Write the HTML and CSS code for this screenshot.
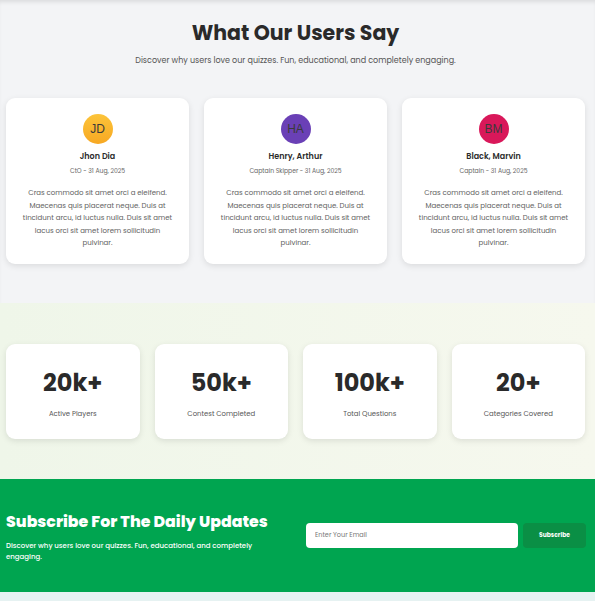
FILE: index.html
```html
<!DOCTYPE html>
<html lang="en">
<head>
<meta charset="utf-8">
<title>What Our Users Say</title>
<link rel="stylesheet" href="styles.css">
</head>
<body>
<section class="testimonials">
  <h2 class="title">What Our Users Say</h2>
  <p class="subtitle">Discover why users love our quizzes. Fun, educational, and completely engaging.</p>
  <div class="cards">
    <article class="card">
      <div class="avatar avatar-yellow">JD</div>
      <h3 class="name">Jhon Dia</h3>
      <p class="role">CtO - 31 Aug, 2025</p>
      <p class="quote">Cras commodo sit amet orci a eleifend. Maecenas quis placerat neque. Duis at tincidunt arcu, id luctus nulla. Duis sit amet lacus orci sit amet lorem sollicitudin pulvinar.</p>
    </article>
    <article class="card">
      <div class="avatar avatar-purple">HA</div>
      <h3 class="name">Henry, Arthur</h3>
      <p class="role">Captain Skipper - 31 Aug, 2025</p>
      <p class="quote">Cras commodo sit amet orci a eleifend. Maecenas quis placerat neque. Duis at tincidunt arcu, id luctus nulla. Duis sit amet lacus orci sit amet lorem sollicitudin pulvinar.</p>
    </article>
    <article class="card">
      <div class="avatar avatar-red">BM</div>
      <h3 class="name">Black, Marvin</h3>
      <p class="role">Captain - 31 Aug, 2025</p>
      <p class="quote">Cras commodo sit amet orci a eleifend. Maecenas quis placerat neque. Duis at tincidunt arcu, id luctus nulla. Duis sit amet lacus orci sit amet lorem sollicitudin pulvinar.</p>
    </article>
  </div>
</section>

<section class="stats">
  <div class="stat-grid">
    <div class="stat"><div class="stat-num">20k+</div><div class="stat-label">Active Players</div></div>
    <div class="stat"><div class="stat-num">50k+</div><div class="stat-label">Contest Completed</div></div>
    <div class="stat"><div class="stat-num">100k+</div><div class="stat-label">Total Questions</div></div>
    <div class="stat"><div class="stat-num">20+</div><div class="stat-label">Categories Covered</div></div>
  </div>
</section>

<section class="subscribe">
  <div class="sub-text">
    <h2 class="sub-title">Subscribe For The Daily Updates</h2>
    <p class="sub-desc">Discover why users love our quizzes. Fun, educational, and completely engaging.</p>
  </div>
  <form class="sub-form">
    <input class="sub-input" type="email" placeholder="Enter Your Email">
    <button class="sub-btn" type="button">Subscribe</button>
  </form>
</section>
<div class="bottom-strip"></div>
</body>
</html>
```
FILE: styles.css
```css
* { box-sizing: border-box; }
html, body { margin: 0; padding: 0; }
body {
  font-family: Poppins, "Open Sans", "Noto Sans", sans-serif;
  background: #f3f4f6;
  color: #2b2b2b;
  width: 595px;
}

.testimonials {
  background: #f3f4f6;
  padding: 19px 10px 39px 6px;
  box-shadow: inset 0 4px 4px -2px rgba(0,0,0,0.10);
  text-align: center;
}
.title {
  margin: 0;
  font-size: 20.5px;
  line-height: 28px;
  font-weight: 700;
  color: #2a2a2a;
}
.subtitle {
  margin: 8px 0 0;
  font-size: 8px;
  line-height: 12px;
  color: #555;
}
.cards {
  margin-top: 31px;
  display: grid;
  grid-template-columns: repeat(3, 1fr);
  gap: 15px;
}
.card {
  background: #fff;
  border-radius: 9px;
  box-shadow: 0 2px 6px rgba(0,0,0,0.10);
  padding: 16px 15px 14px;
  display: flex;
  flex-direction: column;
  align-items: center;
}
.avatar {
  flex-shrink: 0;
  width: 30px;
  height: 30px;
  border-radius: 50%;
  display: flex;
  align-items: center;
  justify-content: center;
  font-size: 12px;
  color: #3a3a3a;
  font-family: "Liberation Sans", Arial, sans-serif;
}
.avatar-yellow { background: linear-gradient(180deg, #fcc43a, #f7a823); }
.avatar-purple { background: #6a40b6; }
.avatar-red { background: #d9185a; }
.name {
  margin: 7px 0 0;
  font-size: 8px;
  line-height: 12px;
  font-weight: 600;
  color: #2b2b2b;
}
.role {
  margin: 3px 0 0;
  font-size: 6.1px;
  line-height: 10px;
  color: #666;
}
.quote {
  margin: 11px 0 0;
  font-size: 7px;
  line-height: 12.6px;
  color: #616161;
}

.stats {
  background: linear-gradient(90deg, #eff6e9, #f6f8ee);
  padding: 41px 10px 40px 6px;
}
.stat-grid {
  display: grid;
  grid-template-columns: repeat(4, 1fr);
  gap: 15px;
}
.stat {
  background: #fff;
  border-radius: 9px;
  box-shadow: 0 2px 6px rgba(0,0,0,0.10);
  height: 95px;
  padding-top: 24px;
  text-align: center;
}
.stat-num {
  font-size: 24px;
  line-height: 30px;
  font-weight: 700;
  color: #2a2a2a;
}
.stat-label {
  margin-top: 11px;
  font-size: 6.9px;
  line-height: 10px;
  color: #555;
}

.subscribe {
  background: #00a550;
  height: 113px;
  padding: 0 9px 0 6px;
  display: flex;
  align-items: center;
  justify-content: space-between;
}
.sub-text { width: 255px; }
.sub-title {
  margin: 0;
  font-size: 15.8px;
  line-height: 28px;
  font-weight: 800;
  color: #fff;
  white-space: nowrap;
}
.sub-desc {
  margin: 4px 0 0;
  font-size: 7px;
  line-height: 11.5px;
  font-weight: 500;
  color: #fff;
}
.sub-form {
  display: flex;
  gap: 5px;
  margin: 0;
}
.sub-input {
  width: 212px;
  height: 25px;
  border: none;
  border-radius: 4px;
  background: #fff;
  padding: 0 9px;
  font-family: inherit;
  font-size: 6.5px;
  color: #333;
  outline: none;
}
.sub-input::placeholder { color: #777; }
.sub-btn {
  width: 63px;
  height: 25px;
  border: none;
  border-radius: 4px;
  background: #0a8f45;
  color: #fff;
  font-family: inherit;
  font-size: 6px;
  font-weight: 700;
  cursor: pointer;
}
.bottom-strip {
  height: 9px;
  background: #e6f2f2;
}
```
